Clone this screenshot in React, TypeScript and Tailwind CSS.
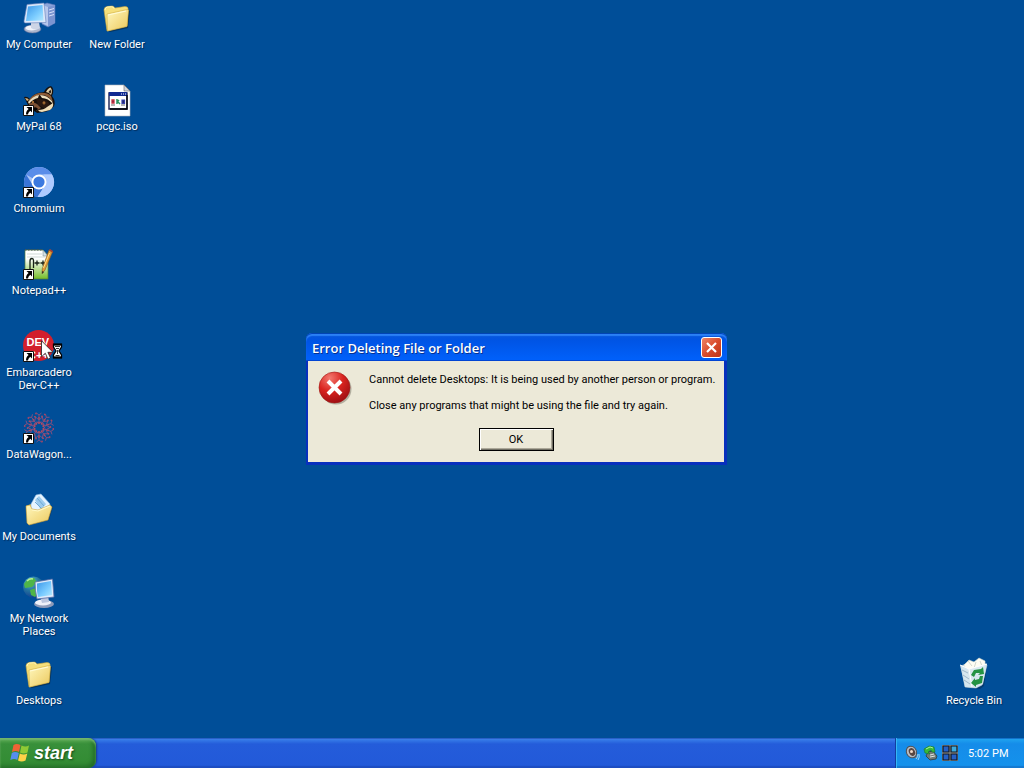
import type { ReactNode } from 'react';

function Icon({ children }: { children: ReactNode }) {
  return (
    <svg viewBox="0 0 32 32" className="size-8 shrink-0 overflow-visible" aria-hidden="true">
      {children}
    </svg>
  );
}

function ShortcutArrow() {
  return (
    <g>
      <path d="M0.5 21.5h10v10h-10z" fill="#fff" stroke="#111" />
      <path d="M3.500 23h5.500v5.500l-1.700-1.700C5.800 28 5.300 29 5 30.500H3c0-2.400.9-4 2.600-5.400z" fill="#000" />
    </g>
  );
}

function FolderIcon() {
  return (
    <Icon>
      <path d="M5 28 9 30l18-4 2-17-3-1z" fill="#06233f" opacity=".6" />
      <path d="M3 8q0-3 3-3.500l5-.5q2 0 3 2l10-1.500q3 0 3 2L26 24 6 29z" fill="#f5df7b" stroke="#c9a640" strokeWidth=".6" />
      <path d="m6 12 20-4.500q1.500 0 1.500 1L26 24.500 6.500 29z" fill="url(#folderFace)" stroke="#d2ae43" strokeWidth=".6" />
      <path d="m7 13 18-4" stroke="#fffbd6" strokeWidth="1.200" />
      <path d="M4 8q0-2.500 2.500-3l4-.3q2 0 2.500 2" fill="none" stroke="#fff7bd" />
    </Icon>
  );
}

function ComputerIcon() {
  return (
    <Icon>
      <path d="m19 3 5-2 8 2v18l-7 4-6-3z" fill="#8ca4d9" stroke="#5b76ba" strokeWidth=".6" />
      <path d="m19 3 6 2v19l-6-3z" fill="#b7c7ec" />
      <path d="m25 5 7-2v18l-7 3z" fill="#7b94d0" />
      <path d="m26 8 5-1.500M26 11l5-1.500M26 14l5-1.500" stroke="#d8e2fa" />
      <ellipse cx="9.500" cy="27" rx="8.500" ry="4" fill="#adb6cd" stroke="#5c6c97" strokeWidth=".6" />
      <ellipse cx="8.500" cy="26" rx="6" ry="2.500" fill="#f1f3f9" />
      <path d="m8 19 8 1 1 6q-4 3-9 0z" fill="#cdd5e6" />
      <path d="M4 2.500 21 1l2 19.500L2.500 21q-2 0-1.500-2z" fill="#dce8fa" stroke="#667fb8" strokeWidth=".6" />
      <path d="M5 4.500 19.500 3l1 15.500L3 19z" fill="url(#screen)" />
    </Icon>
  );
}

function RaccoonIcon() {
  return (
    <Icon>
      <path d="M1 13q3-1 6 2 3-6 14-7 2-5 7-6 4 3 1 10 4 5 2 10-3 5-10 6l-7 1-9-8z" fill="#17100c" />
      <path d="M23 8q2-4 4.500-4.500Q30 6 28 11l-2-2z" fill="#e3cfa6" />
      <path d="m25.500 8 2-2.500q1 2 0 4z" fill="#2b1b13" />
      <path d="M2 14q3 0 4 2l-2 1z" fill="#d9b57e" />
      <path d="M5 18q3-7 11-9 8-1 12 3l2 6q-4-6-10-7-8-1-15 7z" fill="#8c5b37" />
      <path d="M5 18q5-6 11-7l-1 3q-5 1-9 6z" fill="#ead9b7" />
      <path d="M17 11q7 0 12 6l1 3q-5-6-11-6z" fill="#f1e1bf" />
      <path d="M13 15q6-1 12 3l2 3q-2 4-6 3l-6-3z" fill="#2a1911" />
      <path d="m24 23 6-4q1 4-3 7l-8 2q-3 0-4-2 6 0 9-3z" fill="#f1dfb8" />
      <path d="M6 20q4-3 8 0l4 4-5 3-6-4z" fill="#7a5034" />
      <circle cx="21" cy="19" r="1.400" fill="#c9833d" />
      <circle cx="21" cy="19" r=".6" fill="#000" />
      <circle cx="10" cy="18" r="1" fill="#c9833d" />
      <path d="M10 24q3-2 5 1l-3 3z" fill="#060505" />
      <ShortcutArrow />
    </Icon>
  );
}

function ChromiumIcon() {
  return (
    <Icon>
      <circle cx="16" cy="16" r="15" fill="#a9c4f5" />
      <path d="M16 16 3 8.500A15 15 0 0 1 29 8.500H16.500z" fill="#5a8de9" />
      <path d="M3 8.500A15 15 0 0 0 14.500 31l7-11h-11z" fill="#3974d6" />
      <path d="M29 8.500A15 15 0 0 1 14.500 31l8-12q2-5-2-10.500z" fill="#aecaff" />
      <circle cx="16" cy="16" r="7.500" fill="#fff" />
      <circle cx="16" cy="16" r="5.600" fill="#3c79df" />
      <ShortcutArrow />
    </Icon>
  );
}

function NotepadIcon() {
  return (
    <Icon>
      <path d="M2 2h18l5 6v23H2z" fill="url(#paperGreen)" stroke="#58803b" strokeWidth=".7" />
      <path d="M20 2v6h5z" fill="#d5e2e8" stroke="#6a7d84" strokeWidth=".5" />
      <path d="M2 1.800h18" stroke="#48525a" strokeWidth="1.200" strokeDasharray="1.500 1.500" />
      <path d="M4 6h15M4 9h18" stroke="#bbc8c4" strokeWidth=".7" />
      <path d="M7 21v-8q0-2.500 2-2.500 1.500 0 1.500 2V20" fill="none" stroke="#162115" strokeWidth="1.300" />
      <path d="M11.500 15h5M14 12.500v5M17.500 15h5M20 12.500v5" stroke="#172117" strokeWidth="1.300" />
      <path d="m26 2 3.500 2L22 22l-3 3.500.3-4.800z" fill="#e29b35" stroke="#835524" strokeWidth=".6" />
      <path d="m26.500 5-6 15" stroke="#ffdf87" />
      <path d="m26 2 1-1 3 2-.5 2z" fill="#a74336" />
      <path d="m19 26 .3-3 1.700 1z" fill="#29221e" />
      <ShortcutArrow />
    </Icon>
  );
}

function DevIcon() {
  return (
    <Icon>
      <circle cx="15.500" cy="15.500" r="15.500" fill="#d21f2c" />
      <text x="3.500" y="15.500" fill="#fff" fontFamily="Liberation Sans, Arial, sans-serif" fontSize="11" fontWeight="700">DEV</text>
      <text x="5" y="28.500" fill="#fff" fontFamily="Liberation Sans, Arial, sans-serif" fontSize="11" fontWeight="700">C++</text>
      <ShortcutArrow />
    </Icon>
  );
}

const rays = [0, 36, 72, 108, 144, 180, 216, 252, 288, 324];

function DataWagonIcon() {
  return (
    <Icon>
      <g fill="none" stroke="#84507f" strokeWidth=".9">
        {rays.map((angle) => (
          <g key={angle} transform={`rotate(${angle} 16 15.500)`}>
            <path d="M16 11V3M16 8l-3.500-3M16 8l3.500-3M16 3l-2.500-2M16 3l2.500-2M13 10l3 1 3-1" />
            <circle cx="16" cy="6" r=".9" fill="#b6465c" stroke="none" />
            <circle cx="13" cy="1.500" r=".9" fill="#a94565" stroke="none" />
            <circle cx="19" cy="4.500" r=".9" fill="#b04a62" stroke="none" />
            <circle cx="16" cy="11" r=".9" fill="#c24958" stroke="none" />
          </g>
        ))}
      </g>
      <ShortcutArrow />
    </Icon>
  );
}

function DocumentsIcon() {
  return (
    <Icon>
      <path d="m6 31 20-5 4-13-5-2z" fill="#06284f" opacity=".5" />
      <path d="m3 12 8-3 17 3-3 12-20 5z" fill="#e2b745" />
      <path d="M8 10 13 1l5-1 9 10-4 12-15 1z" fill="#e6f4ff" stroke="#8ebbe0" strokeWidth=".6" />
      <path d="m12 6 4-4 7 8-5 6z" fill="#9ccbed" />
      <path d="m14 4 7 8M12 8l7 7" stroke="#6fa8d4" />
      <path d="m3 12 4-1 2 4 6 1 12-5 2 2-4 13L6 31 4 29z" fill="url(#folderFace)" stroke="#cca13a" strokeWidth=".6" />
      <path d="m9 16 6 1 12-5" fill="none" stroke="#fff9c8" strokeWidth="1.200" />
    </Icon>
  );
}

function NetworkIcon() {
  return (
    <Icon>
      <circle cx="10.500" cy="11" r="10.500" fill="url(#globe)" />
      <path d="M1 8q4-7 10-6l3 4-5 5-7 1zM7 14l6-2 4 4-5 5-4-2z" fill="#4fb548" />
      <path d="M4 5q3-3 6-2" stroke="#b6f096" strokeWidth="1.500" fill="none" />
      <ellipse cx="21" cy="28" rx="10" ry="4" fill="#8f9bb9" />
      <ellipse cx="20" cy="26.500" rx="8" ry="3" fill="#eff1f9" />
      <path d="m17 20 8-1 1 7-7 1z" fill="#bdc7df" />
      <path d="m12 6 17.500-3L31 21l-17 2q-2-8-2-17z" fill="#deebfb" stroke="#576ba4" strokeWidth=".8" />
      <path d="M14 7.500 28 5l1 14-14 2q-1.500-6-1-13.500z" fill="url(#screen)" />
    </Icon>
  );
}

function IsoIcon() {
  return (
    <Icon>
      <path d="M4 1h19l6 6v25H4z" fill="#fff" stroke="#b3b6bc" strokeWidth=".6" />
      <path d="M23 1v6h6z" fill="#d0d5de" stroke="#666" strokeWidth=".6" />
      <path d="M8 9h18v16H8z" fill="#fff" stroke="#1a2153" strokeWidth="1.400" />
      <path d="M8 8h18v4H8z" fill="#112a92" />
      <path d="M20 10h1M22 10h1M24 10h1" stroke="#fff" />
      <path d="M26 11v14H9" stroke="#000" fill="none" strokeWidth="1.300" />
      <path d="M11 16h2v3h-2z" stroke="#c53242" fill="#48213b" strokeWidth="1.300" />
      <path d="M16 15v5M16 18l2-2M17 18l2 2" stroke="#2b9360" fill="none" strokeWidth="1.500" />
      <path d="M21 16h2.500v3.500H21z" fill="#222760" stroke="#353fad" strokeWidth="1.200" />
      <path d="M10 21h4M20 21h4" stroke="#444" strokeWidth=".8" />
    </Icon>
  );
}

function RecycleIcon() {
  return (
    <Icon>
      <path d="m7 29 15 2 4-3 3-20z" fill="#04264e" opacity=".5" />
      <path d="m3 8 7-3 15-1 4 3-5 20-6 3-11-1z" fill="#d8e7ed" stroke="#9bb6c8" strokeWidth=".7" />
      <path d="m6 7 5-5 5 2 5-4 6 3v6l-8 5-10-1z" fill="#fffdf3" stroke="#d9ddcf" strokeWidth=".6" />
      <path d="m10 3 4 5M18 4l-2 6M22 3l2 5" stroke="#d2d8ce" />
      <path d="m2 7 9 4 18-5-4 20-7 4-11-1z" fill="#d6e6ee" opacity=".85" />
      <path d="m2 7 9 4 18-5M11 11l3 18" fill="none" stroke="#fff" />
      <path d="m4 12 6 3M5 17l6 4M6 22l6 4" stroke="#9fb8ca" />
      <path d="m13 17 3-5 7-1 2-2 1 7-6 1 2-2-4 0-2 4z" fill="#249343" />
      <path d="m25 18-1 7-6 2v2l-5-4 4-5v2l4-1 1-3z" fill="#249343" />
    </Icon>
  );
}

type DesktopItem = { label: string; icon: ReactNode };

const items: DesktopItem[] = [
  { label: 'My Computer', icon: <ComputerIcon /> },
  { label: 'MyPal 68', icon: <RaccoonIcon /> },
  { label: 'Chromium', icon: <ChromiumIcon /> },
  { label: 'Notepad++', icon: <NotepadIcon /> },
  { label: 'Embarcadero Dev-C++', icon: <DevIcon /> },
  { label: 'DataWagon...', icon: <DataWagonIcon /> },
  { label: 'My Documents', icon: <DocumentsIcon /> },
  { label: 'My Network Places', icon: <NetworkIcon /> },
  { label: 'Desktops', icon: <FolderIcon /> },
  { label: 'New Folder', icon: <FolderIcon /> },
  { label: 'pcgc.iso', icon: <IsoIcon /> },
];

function Shortcut({ label, icon }: DesktopItem) {
  return (
    <button type="button" className="flex h-[82px] w-[78px] flex-col items-center gap-1 pt-0.5 text-[11px] leading-[13px] text-white">
      {icon}
      <span className="max-w-[76px] text-center [text-shadow:1px_1px_1px_#002c5a]">{label}</span>
    </button>
  );
}

function ErrorDialog() {
  return (
    <section
      role="alertdialog"
      aria-labelledby="dialog-title"
      aria-describedby="dialog-message"
      className="absolute top-[333px] left-[306px] flex w-[421px] flex-col rounded-t-md bg-[#0830bd] pr-[3px] pb-[3px] pl-0.5"
    >
      <header className="-mr-[3px] -ml-0.5 flex h-7 items-center justify-between rounded-t-md bg-linear-to-b from-[#0b58d8] from-0% via-[#0054e4] via-25% to-[#0061fc] pr-[5px] pl-1.5 shadow-[inset_0_1px_0_#0144b4,inset_0_3px_1px_#2b80f5,inset_0_-1px_0_#0145d3]">
        <h1 id="dialog-title" className="pt-0.5 font-['Open_Sans','Noto_Sans',sans-serif] text-[13px] leading-5 font-semibold text-white [text-shadow:1px_1px_0_#06318f]">
          Error Deleting File or Folder
        </h1>
        <button type="button" aria-label="Close" className="mt-px grid size-[21px] place-items-center rounded-[3px] border border-white bg-linear-to-br from-[#ed8365] via-[#d94c2c] to-[#bd3516]">
          <svg viewBox="0 0 13 13" className="size-[13px]" aria-hidden="true">
            <path d="m2 2 9 9M11 2l-9 9" stroke="#fff" strokeWidth="2.200" />
          </svg>
        </button>
      </header>
      <div className="bg-[#ece9d8] px-2.5 pt-2.5 pb-[11px]">
        <div className="flex">
          <svg viewBox="0 0 34 34" className="size-[34px] shrink-0" aria-hidden="true">
            <circle cx="18" cy="18" r="15.500" fill="#837f71" opacity=".55" />
            <circle cx="16.500" cy="16.500" r="15.500" fill="url(#errorRed)" stroke="#9e1b18" strokeWidth=".6" />
            <path d="m10 10 13 13M23 10 10 23" stroke="#fff" strokeWidth="4" />
          </svg>
          <div id="dialog-message" className="ml-[17px] flex flex-col gap-[13px] pt-0.5 text-[11px] leading-[13px] whitespace-nowrap text-black">
            <p>Cannot delete Desktops: It is being used by another person or program.</p>
            <p>Close any programs that might be using the file and try again.</p>
          </div>
        </div>
        <button
          type="button"
          className="mx-auto mt-4 block h-[23px] w-[75px] border border-black bg-[#ece9d8] text-[11px] leading-[13px] shadow-[inset_1px_1px_0_#fff,inset_-1px_-1px_0_#716f64,inset_-2px_-2px_0_#aca899]"
        >
          OK
        </button>
      </div>
    </section>
  );
}

function BusyPointer() {
  return (
    <svg viewBox="0 0 24 20" className="pointer-events-none absolute top-[340px] left-[41px] h-5 w-6" aria-hidden="true">
      <path d="M.5.8v16l3.800-3.600 2.700 6 2.500-1.200-2.600-5.700H12z" fill="#fff" stroke="#222" strokeWidth=".8" />
      <path d="M12.500 4.500h8v2.500l-2.500 4 2.500 4v2.500h-8V15l2.500-4-2.500-4z" fill="#fff" stroke="#000" strokeWidth="1.300" />
      <path d="M12 4.500h9M12 17.500h9" stroke="#000" strokeWidth="2" />
      <path d="M14 6.500h5M15 8.500h3M16.500 10v4M14.500 15.500h4" stroke="#000" strokeWidth=".8" />
    </svg>
  );
}

function Taskbar() {
  return (
    <footer className="flex h-[30px] items-stretch bg-linear-to-b from-[#3f86ed] via-[#245cda] via-20% to-[#2259d9] shadow-[inset_0_1px_0_#2860c8,inset_0_-2px_1px_#1d4cc0]">
      <button
        type="button"
        className="flex w-24 items-center gap-1 rounded-r-lg bg-linear-to-b from-[#5eac56] via-[#38903a] via-20% to-[#328b32] pl-2.5 shadow-[inset_0_2px_2px_#72b76d,inset_-3px_-2px_4px_#226c27,1px_0_2px_#173d8c]"
      >
        <svg viewBox="0 0 20 20" className="size-5" aria-hidden="true">
          <path d="M3.500 2q3-2 7 0L9 9q-3-2-7 0z" fill="#ef6335" />
          <path d="M11.500 2.500q4 2 7.500 0L17.500 9.500q-4 2-7.500 0z" fill="#8fca35" />
          <path d="M1.800 10q3-2 7 0l-1.500 7q-3-2-7 0z" fill="#568eee" />
          <path d="M9.800 10.500q4 2 7.500 0l-1.800 7q-4 2-7.500 0z" fill="#ffd248" />
        </svg>
        <span className="font-['Liberation_Sans',Arial,sans-serif] text-[18px] leading-5 font-bold text-white italic [text-shadow:1px_1px_2px_#174c1a]">start</span>
      </button>
      <div className="ml-auto flex w-[129px] items-center border-l border-[#123e9f] bg-linear-to-b from-[#22a7f0] via-[#158ce9] via-20% to-[#1492ec] pl-2 shadow-[inset_1px_0_0_#35b7f5,inset_0_1px_0_#1273cc,inset_0_-2px_1px_#1579d0]">
        <div className="flex gap-[3px]">
          <svg viewBox="0 0 16 16" className="size-4" aria-label="Volume" role="img">
            <path d="M3 3 9 1l4 12-6-1-5-4z" fill="#777c82" />
            <ellipse cx="7.500" cy="7" rx="5" ry="6" transform="rotate(-25 7.500 7)" fill="#b9bcc1" stroke="#4d5055" />
            <ellipse cx="8" cy="7" rx="3" ry="4" transform="rotate(-25 8 7)" fill="#594641" />
            <circle cx="7.500" cy="6.500" r="1.500" fill="#f0d9c8" />
            <path d="M12 14q2-2 2-5M14 15q2-3 1-6" fill="none" stroke="#9bd5f8" />
          </svg>
          <svg viewBox="0 0 16 16" className="size-4" aria-label="Removable hardware" role="img">
            <path d="m5 7 5-1 4 5-1 3-6 1-4-4z" fill="#737b76" stroke="#2f393d" strokeWidth=".8" />
            <path d="m7 12 5-1M7 10l4-1" stroke="#e2e5e2" />
            <path d="m1 4 5-3 5 1 1 5-3 0-1-2-3 2 2 2-5-1z" fill="#38b837" stroke="#16772a" strokeWidth=".6" />
            <path d="m3 4 4-2 3 1" stroke="#abf099" fill="none" />
          </svg>
          <svg viewBox="0 0 16 16" className="size-4" aria-label="Desktops" role="img">
            <path d="M0 0h16v16H0z" fill="#9a9c98" />
            <path d="M1 1h6v6H1zM1 9h6v6H1zM9 9h6v6H9z" fill="#245fc4" stroke="#10151d" strokeWidth="1.200" />
            <path d="M9 1h6v6H9z" fill="#3baadf" stroke="#10151d" strokeWidth="1.200" />
          </svg>
        </div>
        <time className="ml-2.5 text-[11px] leading-[13px] whitespace-nowrap text-white">5:02 PM</time>
      </div>
    </footer>
  );
}

function Gradients() {
  return (
    <svg className="absolute size-0" aria-hidden="true">
      <defs>
        <linearGradient id="folderFace" x1="0" y1="0" x2="1" y2="1"><stop stopColor="#fff8be" /><stop offset="1" stopColor="#ecc85c" /></linearGradient>
        <linearGradient id="screen" x1="0" y1="0" x2="1" y2="1"><stop stopColor="#3b96e8" /><stop offset=".6" stopColor="#7bccff" /><stop offset="1" stopColor="#b5eaff" /></linearGradient>
        <linearGradient id="paperGreen" x1="0" y1="0" x2="0" y2="1"><stop offset=".3" stopColor="#fff" /><stop offset="1" stopColor="#74bd27" /></linearGradient>
        <radialGradient id="globe" cx=".35" cy=".25" r=".8"><stop stopColor="#60b8d9" /><stop offset=".5" stopColor="#24769f" /><stop offset="1" stopColor="#123d92" /></radialGradient>
        <radialGradient id="errorRed" cx=".35" cy=".2" r=".85"><stop stopColor="#f37a70" /><stop offset=".5" stopColor="#d9241f" /><stop offset="1" stopColor="#9b0d12" /></radialGradient>
      </defs>
    </svg>
  );
}

export default function App() {
  return (
    <div className="relative flex min-h-screen flex-col bg-[#004e98] font-['Roboto','Open_Sans',sans-serif]">
      <Gradients />
      <main className="flex flex-1 items-end justify-between pr-[11px]">
        <div className="grid grid-flow-col grid-rows-9 self-start">
          {items.map((item) => <Shortcut key={item.label} {...item} />)}
        </div>
        <Shortcut label="Recycle Bin" icon={<RecycleIcon />} />
      </main>
      <BusyPointer />
      <ErrorDialog />
      <Taskbar />
    </div>
  );
}
